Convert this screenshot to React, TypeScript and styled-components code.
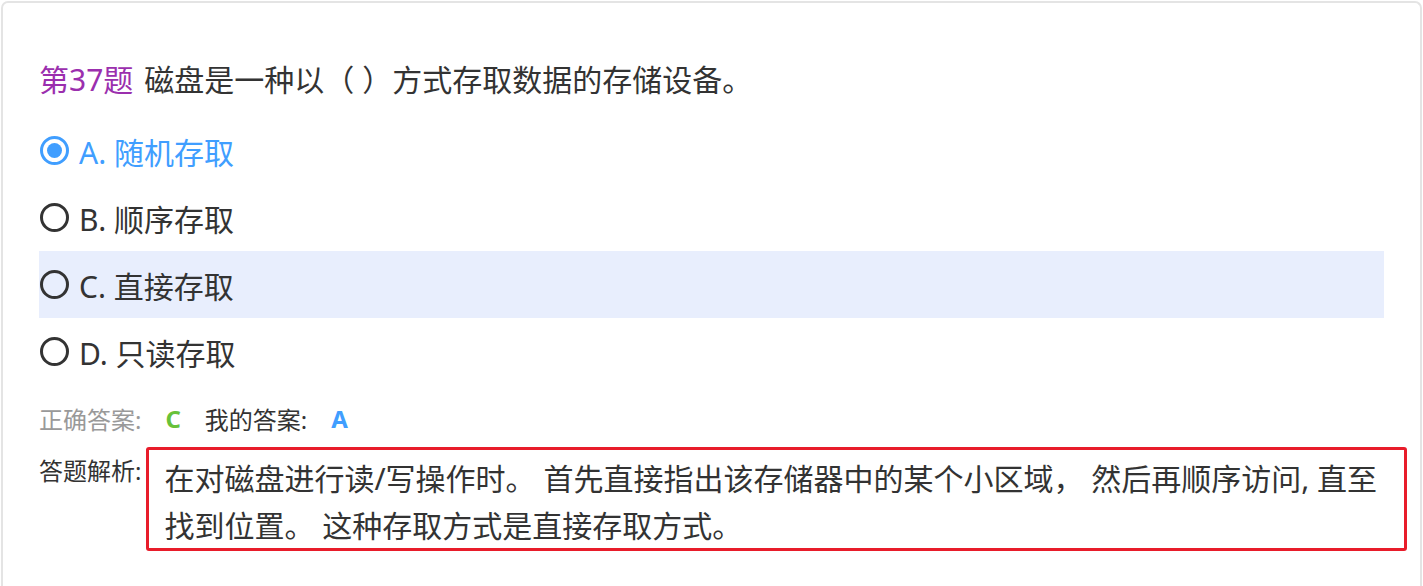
import React from "react";
import styled, { createGlobalStyle } from "styled-components";

const FONT = `"Noto Sans", "Noto Sans CJK SC", sans-serif`;

const GlobalStyle = createGlobalStyle`
  html, body {
    margin: 0;
    padding: 0;
    background: #ffffff;
    font-family: ${FONT};
    color: #333333;
    overflow: hidden;
  }
`;

const Card = styled.div`
  margin: 1px 1px 0 1px;
  height: 585px;
  box-sizing: border-box;
  border: 2px solid #e4e4e4;
  border-bottom: none;
  border-radius: 7px 7px 0 0;
  padding: 57px 36px 0 36px;
`;

const Title = styled.div`
  font-size: 30px;
  line-height: 40px;
  height: 40px;
  margin-bottom: 17px;
  color: #333333;
  white-space: nowrap;

  .title-no {
    color: #9b2fae;
    margin-right: 11px;
  }
`;

const OptionList = styled.ul`
  list-style: none;
  margin: 0;
  padding: 0;
`;

const OptionRow = styled.li<{ $active?: boolean; $hover?: boolean }>`
  display: flex;
  align-items: center;
  height: 67px;
  padding: 0 0 0 1px;
  font-size: 30px;
  color: ${(p) => (p.$active ? "#409eff" : "#333333")};
  background-color: ${(p) => (p.$hover ? "#e8eefd" : "transparent")};
`;

const Radio = styled.span<{ $checked?: boolean }>`
  position: relative;
  width: 29px;
  height: 29px;
  box-sizing: border-box;
  border-radius: 50%;
  border: 3px solid ${(p) => (p.$checked ? "#409eff" : "#333333")};
  margin-right: 10px;
  flex-shrink: 0;

  &::after {
    content: "";
    display: ${(p) => (p.$checked ? "block" : "none")};
    position: absolute;
    top: 4px;
    left: 4px;
    width: 15px;
    height: 15px;
    border-radius: 50%;
    background-color: #409eff;
  }
`;

const AnswerLine = styled.div`
  display: flex;
  align-items: center;
  margin-top: 14px;
  height: 38px;
  font-size: 24px;
  color: #999999;
`;

const AnswerLabel = styled.span<{ $dark?: boolean }>`
  color: ${(p) => (p.$dark ? "#333333" : "#999999")};
`;

const AnswerValue = styled.span<{ $color: string }>`
  color: ${(p) => p.$color};
  font-weight: 700;
  font-size: 24px;
  margin: 0 24px 0 24px;
`;

const AnalysisRow = styled.div`
  display: flex;
  align-items: flex-start;
  margin-top: 10px;
  margin-right: -23px;
`;

const AnalysisLabel = styled.span`
  font-size: 24px;
  line-height: 32px;
  padding-top: 8px;
  color: #333333;
  white-space: nowrap;
  margin-right: 5px;
`;

const AnalysisBox = styled.div`
  flex: 1;
  border: 3px solid #e81c2a;
  border-radius: 3px;
  padding: 5px 12px 0 15px;
  height: 104px;
  box-sizing: border-box;
  font-size: 30px;
  line-height: 47px;
  color: #333333;
`;

const options = [
  { key: "A", text: "随机存取" },
  { key: "B", text: "顺序存取" },
  { key: "C", text: "直接存取" },
  { key: "D", text: "只读存取" },
];

const App = () => {
  const selected = "A";
  const hovered = "C";

  return (
    <>
      <GlobalStyle />
      <Card>
        <Title>
          <span className="title-no">第37题</span>磁盘是一种以（ ）方式存取数据的存储设备。
        </Title>
        <OptionList>
          {options.map((o) => (
            <OptionRow
              key={o.key}
              $active={o.key === selected}
              $hover={o.key === hovered}
            >
              <Radio $checked={o.key === selected} />
              {o.key}. {o.text}
            </OptionRow>
          ))}
        </OptionList>
        <AnswerLine>
          <AnswerLabel>正确答案:</AnswerLabel>
          <AnswerValue $color="#67c23a">C</AnswerValue>
          <AnswerLabel $dark>我的答案:</AnswerLabel>
          <AnswerValue $color="#409eff">A</AnswerValue>
        </AnswerLine>
        <AnalysisRow>
          <AnalysisLabel>答题解析:</AnalysisLabel>
          <AnalysisBox>
            在对磁盘进行读/写操作时。 首先直接指出该存储器中的某个小区域， 然后再顺序访问, 直至找到位置。 这种存取方式是直接存取方式。
          </AnalysisBox>
        </AnalysisRow>
      </Card>
    </>
  );
};

export default App;
